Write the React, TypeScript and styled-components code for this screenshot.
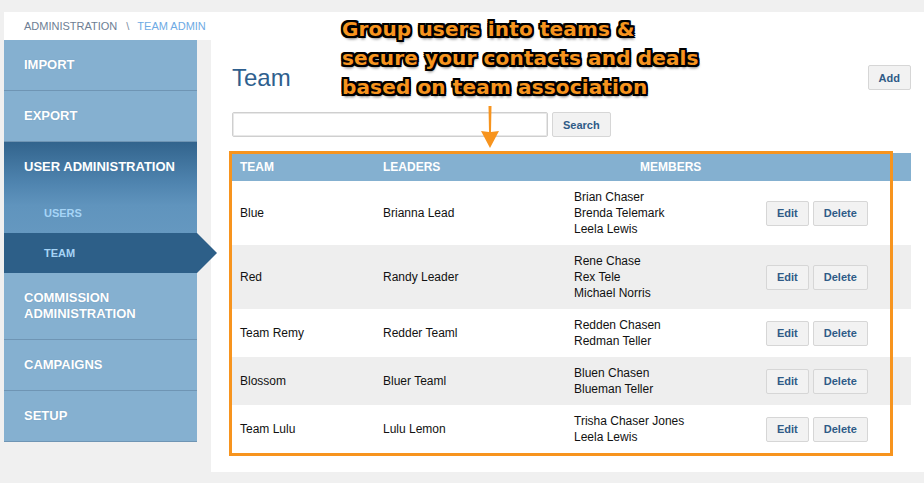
import React from "react";
import styled, { createGlobalStyle } from "styled-components";

const Global = createGlobalStyle`
  html, body { margin: 0; padding: 0; background: #f0f0f0; }
  body { font-family: "Liberation Sans", Arial, sans-serif; }
  * { box-sizing: border-box; }
`;

const Page = styled.div`
  position: relative;
  width: 924px;
  height: 483px;
  padding: 12px 0 0 4px;
  overflow: hidden;
`;

const Breadcrumb = styled.div`
  height: 28px;
  background: #fff;
  padding-left: 20px;
  display: flex;
  align-items: center;
  font-size: 11px;
  color: #6d7e94;
  text-transform: uppercase;
`;

const Crumb = styled.span<{ $current?: boolean }>`
  color: ${(p) => (p.$current ? "#6eaae4" : "#6d7e94")};
`;

const CrumbSep = styled.span`
  margin: 0 8px 0 9px;
  color: #7d8ea2;
`;

const Main = styled.div`
  display: flex;
  gap: 14px;
  align-items: flex-start;
`;

const Sidebar = styled.nav`
  width: 193px;
  display: flex;
  flex-direction: column;
`;

const NavItem = styled.div`
  background: #85b0d0;
  color: #fff;
  font-weight: bold;
  font-size: 13px;
  line-height: 16px;
  padding: 17px 20px;
  border-bottom: 1px solid #6f95b4;
  text-shadow: 0 0 1px rgba(40, 80, 120, 0.25);
`;

const NavGroup = styled.div`
  background: linear-gradient(to bottom, #32648d 0%, #4f84af 45%, #6094bd 70%, #6598c0 100%);
`;

const NavGroupTitle = styled.div`
  color: #fff;
  font-weight: bold;
  font-size: 13px;
  line-height: 16px;
  padding: 17px 20px 18px;
`;

const SubItem = styled.div<{ $active?: boolean }>`
  position: relative;
  height: 40px;
  display: flex;
  align-items: center;
  padding-left: 40px;
  font-size: 11px;
  font-weight: bold;
  color: #a6d4f6;
  background: ${(p) => (p.$active ? "#2d5f88" : "transparent")};
  &::after {
    content: "";
    display: ${(p) => (p.$active ? "block" : "none")};
    position: absolute;
    right: -20px;
    top: 0;
    border-left: 20px solid #2d5f88;
    border-top: 20px solid transparent;
    border-bottom: 20px solid transparent;
  }
`;

const Content = styled.section`
  flex: 1;
  height: 432px;
  background: #fff;
  padding: 25px 13px 0 21px;
`;

const TitleRow = styled.div`
  display: flex;
  justify-content: space-between;
  align-items: center;
  height: 25px;
`;

const Title = styled.h1`
  margin: 0;
  font-size: 24px;
  line-height: 25px;
  font-weight: normal;
  color: #2f5f8e;
`;

const Button = styled.button`
  height: 25px;
  padding: 0 10px;
  background: #f2f2f2;
  border: 1px solid #d6d6d6;
  border-radius: 2px;
  font-family: "Liberation Sans", Arial, sans-serif;
  font-size: 11px;
  font-weight: bold;
  color: #2f5b87;
  cursor: pointer;
`;

const SearchRow = styled.div`
  display: flex;
  gap: 4px;
  margin-top: 22px;
  margin-bottom: 16px;
`;

const SearchInput = styled.input`
  width: 316px;
  height: 25px;
  border: 1px solid #cfcfcf;
  box-shadow: inset 0 0 0 1px #e8e8e8;
  border-radius: 2px;
  outline: none;
`;

const Table = styled.div`
  display: grid;
  grid-template-columns: 143px 191px 192px 1fr;
  font-size: 12px;
  color: #111;
`;

const HeadCell = styled.div<{ $indent?: number }>`
  background: #84b0d0;
  color: #fff;
  font-weight: bold;
  height: 28px;
  display: flex;
  align-items: center;
  padding-left: ${(p) => p.$indent ?? 8}px;
`;

const Row = styled.div<{ $alt?: boolean }>`
  display: contents;
  & > div {
    background: ${(p) => (p.$alt ? "#eeeeee" : "#ffffff")};
  }
`;

const Cell = styled.div`
  display: flex;
  flex-direction: column;
  justify-content: center;
  padding: 8px 8px;
  line-height: 16px;
`;

const Actions = styled.div`
  display: flex;
  align-items: center;
  gap: 4px;
  padding: 8px;
`;

const OrangeFrame = styled.div`
  position: absolute;
  left: 229px;
  top: 151px;
  width: 664px;
  height: 305px;
  border: 3px solid #f7941e;
  pointer-events: none;
`;

const Callout = styled.div`
  position: absolute;
  left: 342px;
  top: 15px;
  font-family: "DejaVu Sans", sans-serif;
  font-weight: bold;
  font-size: 20px;
  line-height: 29px;
  letter-spacing: 0.15px;
  white-space: nowrap;
  color: #f7941e;
  text-shadow: -2px -2px 0 #000, 2px -2px 0 #000, -2px 2px 0 #000, 2px 2px 0 #000,
    0 -2px 0 #000, 0 2px 0 #000, -2px 0 0 #000, 2px 0 0 #000,
    -1px -2px 0 #000, 1px -2px 0 #000, -1px 2px 0 #000, 1px 2px 0 #000,
    1px 3px 3px rgba(0, 0, 0, 0.6);
`;

const ArrowSvg = styled.svg`
  position: absolute;
  left: 480px;
  top: 106px;
`;

const teams = [
  { team: "Blue", leader: "Brianna Lead", members: ["Brian Chaser", "Brenda Telemark", "Leela Lewis"] },
  { team: "Red", leader: "Randy Leader", members: ["Rene Chase", "Rex Tele", "Michael Norris"] },
  { team: "Team Remy", leader: "Redder Teaml", members: ["Redden Chasen", "Redman Teller"] },
  { team: "Blossom", leader: "Bluer Teaml", members: ["Bluen Chasen", "Blueman Teller"] },
  { team: "Team Lulu", leader: "Lulu Lemon", members: ["Trisha Chaser Jones", "Leela Lewis"] },
];

export default function App() {
  return (
    <Page>
      <Global />
      <Breadcrumb>
        <Crumb>Administration</Crumb>
        <CrumbSep>\</CrumbSep>
        <Crumb $current>Team Admin</Crumb>
      </Breadcrumb>
      <Main>
        <Sidebar>
          <NavItem>IMPORT</NavItem>
          <NavItem>EXPORT</NavItem>
          <NavGroup>
            <NavGroupTitle>USER ADMINISTRATION</NavGroupTitle>
            <SubItem>USERS</SubItem>
          </NavGroup>
          <SubItem $active>TEAM</SubItem>
          <NavItem>
            COMMISSION
            <br />
            ADMINISTRATION
          </NavItem>
          <NavItem>CAMPAIGNS</NavItem>
          <NavItem>SETUP</NavItem>
        </Sidebar>
        <Content>
          <TitleRow>
            <Title>Team</Title>
            <Button>Add</Button>
          </TitleRow>
          <SearchRow>
            <SearchInput />
            <Button>Search</Button>
          </SearchRow>
          <Table>
            <HeadCell>TEAM</HeadCell>
            <HeadCell>LEADERS</HeadCell>
            <HeadCell $indent={74}>MEMBERS</HeadCell>
            <HeadCell />
            {teams.map((t, i) => (
              <Row key={t.team} $alt={i % 2 === 1}>
                <Cell>{t.team}</Cell>
                <Cell>{t.leader}</Cell>
                <Cell>
                  {t.members.map((m) => (
                    <span key={m}>{m}</span>
                  ))}
                </Cell>
                <Actions>
                  <Button>Edit</Button>
                  <Button>Delete</Button>
                </Actions>
              </Row>
            ))}
          </Table>
        </Content>
      </Main>
      <OrangeFrame />
      <Callout>
        Group users into teams &amp;
        <br />
        secure your contacts and deals
        <br />
        based on team association
      </Callout>
      <ArrowSvg width="20" height="44" viewBox="0 0 20 44">
        <path d="M8.5 0 L11.5 0 L11 26 L19 25 L10 42 L1 25 L9 26 Z" fill="#f7941e" />
      </ArrowSvg>
    </Page>
  );
}
